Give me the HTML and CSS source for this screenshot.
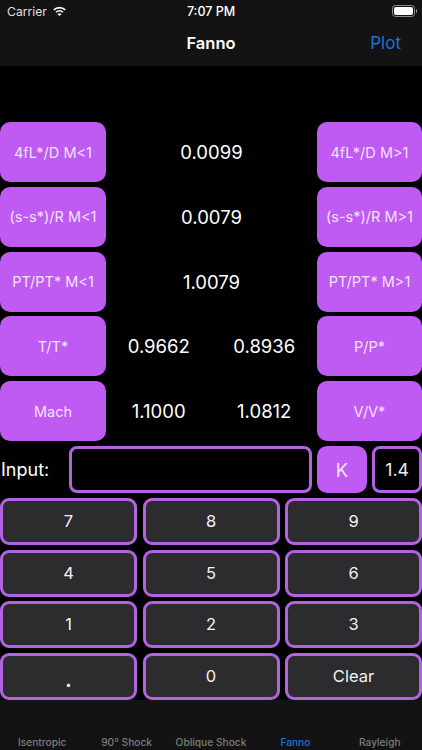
FILE: index.html
```html
<!DOCTYPE html>
<html lang="en">
<head>
<meta charset="utf-8">
<title>Fanno</title>
<link rel="stylesheet" href="styles.css">
</head>
<body>
<div class="app">
  <header class="top">
    <div class="status">
      <div class="status-left">
        <span>Carrier</span>
        <svg class="wifi" viewBox="0 0 16 12" width="15" height="11"><path d="M8 2.6c2.2 0 4.2.85 5.7 2.25l1.15-1.2A9.9 9.9 0 0 0 8 .9a9.9 9.9 0 0 0-6.85 2.75L2.3 4.85A8.2 8.2 0 0 1 8 2.6z" fill="#fff"/><path d="M8 6.1c1.25 0 2.4.47 3.25 1.25l1.17-1.2A6.5 6.5 0 0 0 8 4.4a6.5 6.5 0 0 0-4.42 1.75l1.17 1.2A4.8 4.8 0 0 1 8 6.1z" fill="#fff"/><path d="M8 7.9c-.85 0-1.6.32-2.17.85L8 11l2.17-2.25A3.2 3.2 0 0 0 8 7.9z" fill="#fff"/></svg>
      </div>
      <span class="clock">7:07 PM</span>
      <div class="battery"><span class="battery-fill"></span></div>
    </div>
    <nav class="navbar">
      <h1 class="title">Fanno</h1>
      <a class="plot">Plot</a>
    </nav>
  </header>

  <main class="content">
    <section class="results">
      <button class="solid">4fL*/D M&lt;1</button>
      <div class="value">0.0099</div>
      <button class="solid">4fL*/D M&gt;1</button>

      <button class="solid">(s-s*)/R M&lt;1</button>
      <div class="value">0.0079</div>
      <button class="solid">(s-s*)/R M&gt;1</button>

      <button class="solid">PT/PT* M&lt;1</button>
      <div class="value">1.0079</div>
      <button class="solid">PT/PT* M&gt;1</button>

      <button class="solid">T/T*</button>
      <div class="value pair"><span>0.9662</span><span>0.8936</span></div>
      <button class="solid">P/P*</button>

      <button class="solid">Mach</button>
      <div class="value pair"><span>1.1000</span><span>1.0812</span></div>
      <button class="solid">V/V*</button>
    </section>

    <section class="input-row">
      <label class="input-label">Input:</label>
      <div class="field grow"></div>
      <button class="solid k">K</button>
      <div class="field gamma">1.4</div>
    </section>

    <section class="keypad">
      <button class="key">7</button>
      <button class="key">8</button>
      <button class="key">9</button>
      <button class="key">4</button>
      <button class="key">5</button>
      <button class="key">6</button>
      <button class="key">1</button>
      <button class="key">2</button>
      <button class="key">3</button>
      <button class="key dot">.</button>
      <button class="key">0</button>
      <button class="key">Clear</button>
    </section>
  </main>

  <footer class="tabs">
    <span class="tab">Isentropic</span>
    <span class="tab">90° Shock</span>
    <span class="tab">Oblique Shock</span>
    <span class="tab active">Fanno</span>
    <span class="tab">Rayleigh</span>
  </footer>
</div>
</body>
</html>
```
FILE: styles.css
```css
* { box-sizing: border-box; }
html, body { margin: 0; padding: 0; background: #000; }
body { font-family: Inter, "Liberation Sans", sans-serif; color: #fff; }
button { font: inherit; color: inherit; padding: 0; margin: 0; }

.app { width: 422px; height: 750px; display: flex; flex-direction: column; overflow: hidden; background: #000; }

.top { height: 66px; background: #131313; flex: none; display: flex; flex-direction: column; }
.status { height: 22px; display: flex; align-items: center; justify-content: space-between; padding: 0 3px 0 7px; font-size: 12.2px; position: relative; }
.status-left { display: flex; align-items: center; gap: 5px; color: #e0e0e0; }
.wifi { display: block; }
.clock { position: absolute; left: 0; right: 0; text-align: center; font-weight: 500; font-size: 12.5px; }
.battery { width: 23px; height: 12px; border: 1px solid #8e8e8e; border-radius: 3.5px; padding: 1px; margin-right: 4px; position: relative; }
.battery::after { content: ""; position: absolute; right: -3px; top: 3px; width: 1.5px; height: 4px; background: #8e8e8e; border-radius: 0 1px 1px 0; }
.battery-fill { display: block; height: 100%; background: #fff; border-radius: 2px; }

.navbar { flex: 1; display: flex; align-items: center; justify-content: center; position: relative; padding-bottom: 2px; }
.title { margin: 0; font-size: 16.5px; font-weight: 600; }
.plot { position: absolute; right: 21px; top: 11px; font-size: 17px; color: #1c74d4; }

.content { flex: none; height: 634px; display: flex; flex-direction: column; padding-top: 56px; }

.results { flex: none; display: grid; grid-template-columns: 106px 1fr 105px; grid-auto-rows: 60px; row-gap: 4.75px; }
.solid { background: #bf5af2; border: 0; border-radius: 10px; font-size: 14.5px; color: #f3e3fb; }
.value { display: flex; align-items: center; justify-content: center; font-size: 18.5px; }
.pair { display: grid; grid-template-columns: 1fr 1fr; text-align: center; }

.input-row { flex: none; display: flex; align-items: stretch; height: 47px; margin-top: 5px; }
.input-label { width: 69px; flex: none; display: flex; align-items: center; font-size: 18px; padding-left: 1px; }
.field { border: 3px solid #b163e0; border-radius: 8px; background: #000; }
.grow { width: 243px; flex: none; }
.k { width: 50px; flex: none; margin-left: 5px; font-size: 18.5px; }
.gamma { width: 50px; flex: none; margin-left: 5px; display: flex; align-items: center; justify-content: center; font-size: 17.5px; color: #eee; }

.keypad { flex: none; display: grid; grid-template-columns: repeat(3, 137px); justify-content: space-between; grid-auto-rows: 47px; row-gap: 4.67px; margin-top: 5px; }
.key { background: #2c2c2e; border: 3px solid #b163e0; border-radius: 9px; font-size: 16.5px; color: #f2f2f2; padding-bottom: 1px; }
.dot { padding-top: 9px; padding-bottom: 0; font-size: 19px; font-weight: 700; }

.tabs { height: 50px; flex: none; background: #131313; display: grid; grid-template-columns: repeat(5, 1fr); align-items: end; text-align: center; font-size: 10.2px; font-weight: 500; color: #7c7c7c; padding-bottom: 1px; }
.tab { white-space: nowrap; line-height: 13px; }
.active { color: #1c74d4; }
```
